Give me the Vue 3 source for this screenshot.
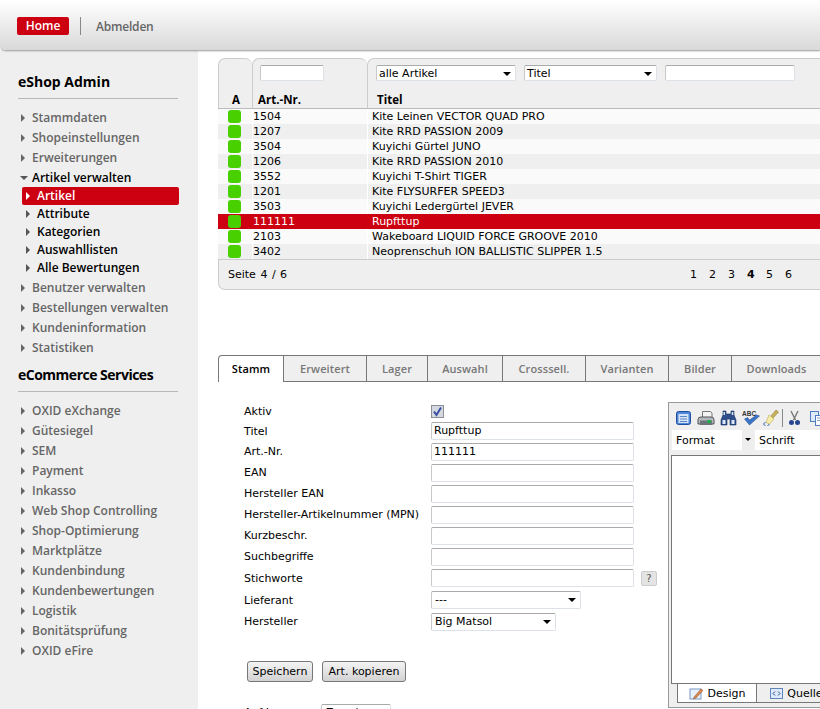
<script setup>
const menu = ['Stammdaten', 'Shopeinstellungen', 'Erweiterungen']
const subMenu = ['Artikel', 'Attribute', 'Kategorien', 'Auswahllisten', 'Alle Bewertungen']
const menuAfter = ['Benutzer verwalten', 'Bestellungen verwalten', 'Kundeninformation', 'Statistiken']
const services = [
  'OXID eXchange', 'Gütesiegel', 'SEM', 'Payment', 'Inkasso', 'Web Shop Controlling',
  'Shop-Optimierung', 'Marktplätze', 'Kundenbindung', 'Kundenbewertungen', 'Logistik',
  'Bonitätsprüfung', 'OXID eFire',
]
const rows = [
  ['1504', 'Kite Leinen VECTOR QUAD PRO'],
  ['1207', 'Kite RRD PASSION 2009'],
  ['3504', 'Kuyichi Gürtel JUNO'],
  ['1206', 'Kite RRD PASSION 2010'],
  ['3552', 'Kuyichi T-Shirt TIGER'],
  ['1201', 'Kite FLYSURFER SPEED3'],
  ['3503', 'Kuyichi Ledergürtel JEVER'],
  ['111111', 'Rupfttup'],
  ['2103', 'Wakeboard LIQUID FORCE GROOVE 2010'],
  ['3402', 'Neoprenschuh ION BALLISTIC SLIPPER 1.5'],
]
const tabs = [
  ['Stamm', 66], ['Erweitert', 83], ['Lager', 61], ['Auswahl', 75],
  ['Crosssell.', 83], ['Varianten', 83], ['Bilder', 63], ['Downloads', 90],
]
const fields = [
  ['Titel', 'Rupfttup', 20],
  ['Art.-Nr.', '111111', 21],
  ['EAN', '', 21],
  ['Hersteller EAN', '', 21],
  ['Hersteller-Artikelnummer (MPN)', '', 21],
  ['Kurzbeschr.', '', 21],
  ['Suchbegriffe', '', 21],
]
</script>

<template>
  <div class="page">
    <header class="top">
      <span class="home">Home</span>
      <span class="sep"></span>
      <span class="logout">Abmelden</span>
    </header>

    <div class="body">
      <aside class="side">
        <h2 class="side-title">eShop Admin</h2>
        <ul class="nav">
          <li v-for="m in menu" :key="m"><i class="arrow"></i>{{ m }}</li>
          <li class="open"><i class="arrow down"></i>Artikel verwalten</li>
        </ul>
        <ul class="sub">
          <li v-for="(s, i) in subMenu" :key="s" :class="{ active: i === 0 }"><i class="arrow"></i>{{ s }}</li>
        </ul>
        <ul class="nav">
          <li v-for="m in menuAfter" :key="m"><i class="arrow"></i>{{ m }}</li>
        </ul>
        <h2 class="side-title second">eCommerce Services</h2>
        <ul class="nav">
          <li v-for="m in services" :key="m"><i class="arrow"></i>{{ m }}</li>
        </ul>
      </aside>

      <main class="main">
        <section class="list">
          <div class="list-head">
            <div class="col-a"><b>A</b></div>
            <div class="col-nr">
              <span class="fake-input nr-input"></span>
              <b>Art.-Nr.</b>
            </div>
            <div class="col-title">
              <div class="filters">
                <span class="fake-input sel w1">alle Artikel<i class="caret"></i></span>
                <span class="fake-input sel w2">Titel<i class="caret"></i></span>
                <span class="fake-input w3"></span>
              </div>
              <b>Titel</b>
            </div>
          </div>
          <div
            v-for="(r, i) in rows"
            :key="r[0]"
            class="row"
            :class="{ odd: i % 2 === 1, sel: r[0] === '111111' }"
          >
            <span class="cell-a"><i class="dot"></i></span>
            <span class="cell-nr">{{ r[0] }}</span>
            <span class="cell-title">{{ r[1] }}</span>
          </div>
          <div class="list-foot">
            <span class="page-info">Seite 4 / 6</span>
            <div class="pages">
              <span>1</span><span>2</span><span>3</span><b>4</b><span>5</span><span>6</span>
            </div>
          </div>
        </section>

        <nav class="tabs">
          <span
            v-for="(t, i) in tabs"
            :key="t[0]"
            class="tab"
            :class="{ current: i === 0 }"
            :style="{ width: t[1] + 'px' }"
          >{{ t[0] }}</span>
        </nav>

        <section class="edit">
          <div class="form">
            <div class="f-row aktiv">
              <label>Aktiv</label>
              <span class="check">
                <svg width="11" height="11" viewBox="0 0 11 11"><path d="M2 5.500 4.500 9 9 1.500" fill="none" stroke="#3a4fa5" stroke-width="2"/></svg>
              </span>
            </div>
            <div v-for="f in fields" :key="f[0]" class="f-row" :style="{ height: f[2] + 'px' }">
              <label>{{ f[0] }}</label>
              <span class="fake-input text">{{ f[1] }}</span>
            </div>
            <div class="f-row tall">
              <label>Stichworte</label>
              <span class="fake-input text"></span>
              <span class="help">?</span>
            </div>
            <div class="f-row tall">
              <label>Lieferant</label>
              <span class="fake-input sel s-lief">---<i class="caret"></i></span>
            </div>
            <div class="f-row">
              <label>Hersteller</label>
              <span class="fake-input sel s-her">Big Matsol<i class="caret"></i></span>
            </div>
            <div class="buttons">
              <button class="btn b1">Speichern</button>
              <button class="btn b2">Art. kopieren</button>
            </div>
            <div class="f-row last">
              <label>Auf Lager</label>
              <span class="fake-input last-input">Zuordnen</span>
            </div>
          </div>

          <div class="editor">
            <div class="tools">
              <svg width="17" height="16" viewBox="0 0 17 16"><rect x="1.500" y="1.500" width="14" height="13" rx="2" fill="#4f86d6" stroke="#1f4ea0"/><rect x="3.500" y="4" width="10" height="9" fill="#d5e4f8"/><path d="M5 6.500h7M5 9h7M5 11.500h7" stroke="#5f86c4"/></svg>
              <svg width="18" height="16" viewBox="0 0 18 16"><path d="M5.500 7V1.500h8L15 3v4" fill="#f2f2f2" stroke="#777"/><path d="M1 9.500Q1 7 4 7h10q3 0 3 2.500V14H1z" fill="#b4b8be" stroke="#555"/><rect x="3" y="10.500" width="12" height="4.500" fill="#6f737a"/><rect x="10.500" y="10" width="3.500" height="3" fill="#19b347"/></svg>
              <svg width="17" height="16" viewBox="0 0 17 16"><path d="M3 1h3v3h5V1h3v4l2 5v5H10V9H7v6H1v-5l2-5z" fill="#2f4f8c" stroke="#16305f" stroke-width=".6"/><rect x="2.500" y="10" width="3" height="4" fill="#dce7f7"/><rect x="11.500" y="10" width="3" height="4" fill="#dce7f7"/><rect x="3.500" y="2" width="1.500" height="3" fill="#dce7f7"/><rect x="11.800" y="2" width="1.500" height="3" fill="#dce7f7"/></svg>
              <svg class="abc" width="18" height="16" viewBox="0 0 18 16"><text x="0" y="6" font-size="6.500" font-weight="700" font-family="Liberation Sans, sans-serif" fill="#333">ABC</text><path d="M2.500 9l5 6 10-9-3-1-7 5-2-2.500z" fill="#3c74c8" stroke="#1f4688" stroke-width=".5"/></svg>
              <svg width="17" height="18" viewBox="0 0 17 18"><path d="M9 7 14 1l2.500 2L11 9z" fill="#c9b25c" stroke="#8d7a30" stroke-width=".6"/><path d="M7 6l5 4-4.500 5-3.500-1.500z" fill="#f6eda8" stroke="#b8a858" stroke-width=".6"/><path d="M3.500 13 1.500 15l2 2M5.500 17l2-2" fill="none" stroke="#2f5fa8"/></svg>
              <i class="tool-sep"></i>
              <svg width="13" height="16" viewBox="0 0 13 16"><path d="M3 1l4.500 9M10 1 5.500 10" stroke="#7c7c7c" stroke-width="1.500" fill="none"/><circle cx="3.500" cy="12.500" r="2.500" fill="#27468f"/><circle cx="9.500" cy="12.500" r="2.500" fill="#27468f"/></svg>
              <svg class="copy" width="16" height="16" viewBox="0 0 16 16"><rect x=".5" y="1.500" width="8" height="10" fill="#dfeafa" stroke="#4f7fc0"/><rect x="5.500" y="5.500" width="9" height="10" fill="#fff" stroke="#4f7fc0"/><path d="M7 8h6M7 10.500h6" stroke="#7fa0d0"/></svg>
            </div>
            <div class="formats">
              <span class="fmt">Format<i class="fmt-btn"><i class="caret small"></i></i></span>
              <span class="fmt2">Schrift</span>
            </div>
            <div class="area"></div>
            <div class="ed-tabs">
              <span class="ed-tab on">
                <svg width="15" height="14" viewBox="0 0 15 14"><rect x="1" y="2" width="11" height="10" fill="#e8f0fb" stroke="#7a98c4"/><path d="M5 10 12 2l2 1.500L7 11l-2.500 1z" fill="#d98a4c" stroke="#8a4f2a" stroke-width=".5"/></svg>
                Design
              </span>
              <span class="ed-tab">
                <svg width="13" height="12" viewBox="0 0 13 12"><rect x=".5" y=".5" width="12" height="10" fill="#dfeafa" stroke="#5f86bd"/><path d="M5 3.500 3 5.500l2 2M8 3.500l2 2-2 2" fill="none" stroke="#234a8a"/></svg>
                Quelle
              </span>
            </div>
          </div>
        </section>
      </main>
    </div>
  </div>
</template>

<style scoped>
.page {
  width: 820px;
  height: 709px;
  overflow: hidden;
  font-family: "DejaVu Sans", sans-serif;
  font-size: 11px;
  color: #000;
  background: #fff;
}
.top {
  height: 50px;
  box-sizing: border-box;
  display: flex;
  align-items: center;
  padding: 2px 0 0 17px;
  background: linear-gradient(#fff, #d9d9d9);
  border-bottom-left-radius: 6px;
  box-shadow: 0 1px 2px #999;
  position: relative;
}
.home {
  width: 52px;
  height: 18px;
  line-height: 17px;
  background: #cc0011;
  color: #fff;
  border-radius: 2px;
  text-align: center;
  font-family: "Open Sans", sans-serif;
  font-size: 12px;
  font-weight: 600;
}
.sep {
  width: 1px;
  height: 18px;
  background: #888;
  margin: 0 15px 0 11px;
}
.logout {
  color: #666;
  font-weight: 600;
  font-family: "Open Sans", sans-serif;
  font-size: 12px;
  letter-spacing: -.2px;
}
.body {
  display: flex;
  height: 659px;
}
.side {
  width: 198px;
  flex: none;
  background: #efefef;
  padding: 24px 0 0 18px;
  box-sizing: border-box;
  font-family: "Open Sans", sans-serif;
}
.side-title {
  margin: 0 20px 9px 0;
  height: 16px;
  line-height: 16px;
  padding-bottom: 8px;
  border-bottom: 1px solid #b8b8b8;
  font-size: 14px;
  font-weight: 700;
  color: #000;
}
.side-title.second {
  margin-top: 9px;
  letter-spacing: -.5px;
}
.nav, .sub {
  list-style: none;
  margin: 0;
  padding: 0;
}
.sub {
  margin: -1px 0 1px;
}
.nav li {
  height: 20px;
  line-height: 20px;
  padding-left: 14px;
  font-size: 12px;
  font-weight: 600;
  color: #666;
  position: relative;
}
.nav li.open {
  color: #000;
}
.arrow {
  position: absolute;
  left: 3px;
  top: 6px;
  width: 0;
  height: 0;
  border-left: 4px solid #666;
  border-top: 4px solid transparent;
  border-bottom: 4px solid transparent;
}
.arrow.down {
  left: 2px;
  top: 8px;
  border-top: 4px solid #555;
  border-left: 4px solid transparent;
  border-right: 4px solid transparent;
  border-bottom: 0;
}
.sub li {
  height: 18px;
  line-height: 18px;
  width: 157px;
  margin-left: 4px;
  padding-left: 15px;
  box-sizing: border-box;
  font-size: 12px;
  font-weight: 600;
  position: relative;
  border-radius: 2px;
}
.sub li .arrow {
  left: 4px;
  top: 5px;
  border-left-color: #555;
}
.sub li.active {
  background: #cc0011;
  color: #fff;
}
.sub li.active .arrow {
  border-left-color: #fff;
}
.main {
  flex: 1;
  min-width: 0;
  overflow: hidden;
  padding: 8px 0 0 20px;
  box-sizing: border-box;
}
.list {
  width: 640px;
}
.list-head {
  display: flex;
  height: 51px;
  border-bottom: 1px solid #bbb;
  box-sizing: border-box;
}
.list-head b {
  font-family: "Open Sans", sans-serif;
  font-size: 11.5px;
}
.col-a, .col-nr, .col-title {
  background: #efefef;
  border-top: 1px solid #ccc;
  border-left: 1px solid #ccc;
  box-sizing: border-box;
  border-radius: 7px 7px 0 0;
  position: relative;
}
.col-a { width: 34px; }
.col-nr { width: 115px; }
.col-title { flex: 1; }
.col-a b { position: absolute; left: 13px; bottom: 1px; }
.col-nr b { position: absolute; left: 5px; bottom: 1px; }
.col-title b { position: absolute; left: 9px; bottom: 1px; }
.fake-input {
  display: block;
  box-sizing: border-box;
  background: #fff;
  border: 1px solid #dde2e8;
  border-top-color: #aaa;
  border-left-color: #c8c8c8;
  border-radius: 2px;
  font-size: 11px;
  line-height: 15px;
  padding-left: 2px;
}
.nr-input {
  position: absolute;
  left: 7px;
  top: 6px;
  width: 64px;
  height: 16px;
}
.filters {
  display: flex;
  gap: 8px;
  padding: 6px 0 0 8px;
}
.sel {
  position: relative;
}
.w1 { width: 140px; height: 16px; }
.w2 { width: 133px; height: 16px; }
.w3 { width: 130px; height: 16px; }
.caret {
  position: absolute;
  right: 4px;
  top: 6px;
  width: 0;
  height: 0;
  border-top: 4px solid #000;
  border-left: 4px solid transparent;
  border-right: 4px solid transparent;
}
.row {
  display: flex;
  height: 15px;
  line-height: 15px;
  background: #fafafa;
}
.row.odd {
  background: #efefef;
}
.row.sel {
  background: #cc0011;
  color: #fff;
}
.cell-a {
  width: 35px;
  flex: none;
  position: relative;
  box-sizing: border-box;
  border-right: 1px solid #fff;
}
.dot {
  position: absolute;
  left: 10px;
  top: 1px;
  width: 13px;
  height: 13px;
  background: #48d000;
  border-radius: 3px;
}
.cell-nr {
  width: 115px;
  flex: none;
  box-sizing: border-box;
  border-right: 1px solid #fff;
}
.row.sel .cell-a, .row.sel .cell-nr {
  border-right-color: transparent;
}
.cell-title {
  white-space: nowrap;
  padding-left: 4px;
}
.list-foot {
  height: 31px;
  box-sizing: border-box;
  border-top: 1px solid #ccc;
  border-bottom: 1px solid #ccc;
  border-left: 1px solid #ccc;
  border-bottom-left-radius: 7px;
  background: #efefef;
  padding: 0 0 0 9px;
  display: flex;
  align-items: center;
  justify-content: space-between;
}
.page-info {
  word-spacing: 1px;
}
.pages {
  display: flex;
  margin-right: 54px;
}
.pages > * {
  width: 19px;
  font-weight: 400;
}
.pages b {
  font-weight: 700;
}
.tabs {
  display: flex;
  margin-top: 65px;
  width: 640px;
}
.tab {
  height: 27px;
  box-sizing: border-box;
  flex: none;
  border-top: 1px solid #777;
  border-right: 1px solid #777;
  border-bottom: 1px solid #777;
  background: #efefef;
  color: #777;
  text-align: center;
  line-height: 25px;
  font-size: 11px;
  letter-spacing: .1px;
  font-family: "Open Sans", sans-serif;
  font-weight: 600;
}
.tab.current {
  background: #fff;
  color: #000;
  border-left: 1px solid #777;
  border-bottom: 0;
  border-top-left-radius: 4px;
}
.edit {
  display: flex;
  padding: 20px 0 0 26px;
}
.form {
  width: 424px;
  flex: none;
  padding-top: 2px;
}
.f-row {
  display: flex;
  align-items: center;
  height: 21px;
  position: relative;
}
.f-row label {
  width: 187px;
  flex: none;
  white-space: nowrap;
}
.f-row.aktiv {
  height: 20px;
  margin-top: -3px;
}
.f-row.tall {
  height: 22px;
}
.check {
  width: 13px;
  height: 13px;
  box-sizing: border-box;
  background: #d4d8df;
  border: 1px solid #8b8f96;
  display: flex;
  align-items: center;
  justify-content: center;
}
.text {
  width: 203px;
  height: 18px;
  line-height: 16px;
}
.help {
  width: 16px;
  height: 15px;
  margin-left: 7px;
  background: #e4e4e4;
  border: 1px solid #ccc;
  box-sizing: border-box;
  border-radius: 2px;
  text-align: center;
  line-height: 13px;
  font-size: 10px;
  color: #555;
}
.s-lief {
  width: 150px;
  height: 18px;
  line-height: 16px;
  padding-left: 3px;
}
.s-her {
  width: 125px;
  height: 18px;
  line-height: 16px;
  padding-left: 3px;
}
.buttons {
  display: flex;
  gap: 9px;
  padding: 29px 0 0 3px;
}
.btn {
  height: 21px;
  padding: 0;
  border: 1px solid #777;
  border-radius: 3px;
  background: linear-gradient(#f4f4f4, #d2d2d2);
  font-family: "DejaVu Sans", sans-serif;
  font-size: 11px;
  color: #000;
}
.b1 { width: 66px; }
.b2 { width: 84px; }
.last {
  margin-top: 20px;
}
.last label {
  width: 77px;
}
.last-input {
  width: 70px;
  height: 18px;
  padding-left: 4px;
}
.editor {
  flex: none;
  width: 240px;
  height: 306px;
  box-sizing: border-box;
  background: #efefef;
  border: 1px solid #999;
  position: relative;
}
.tools {
  display: flex;
  align-items: center;
  gap: 5px;
  height: 27px;
  padding: 2px 0 0 6px;
  box-sizing: border-box;
}
.abc {
  margin-right: -3px;
}
.tool-sep {
  width: 1px;
  height: 18px;
  background: #888;
  margin-left: -2px;
}
.copy {
  margin-left: 4px;
}
.formats {
  display: flex;
  height: 20px;
  margin: 0 0 0 3px;
  line-height: 21px;
}
.fmt {
  width: 81px;
  background: #fff;
  padding-left: 4px;
  box-sizing: border-box;
  position: relative;
  margin-right: 2px;
}
.fmt-btn {
  position: absolute;
  right: 0;
  top: 0;
  width: 11px;
  height: 20px;
  background: #eee;
}
.caret.small {
  right: 2px;
  top: 8px;
  border-top-width: 3px;
  border-left-width: 3px;
  border-right-width: 3px;
}
.fmt2 {
  flex: 1;
  background: #fff;
  padding-left: 4px;
}
.area {
  margin: 5px 0 0 2px;
  height: 229px;
  background: #fff;
  border: 1px solid #777;
  box-sizing: border-box;
}
.ed-tabs {
  display: flex;
  margin-left: 8px;
}
.ed-tab {
  height: 19px;
  box-sizing: border-box;
  width: 80px;
  display: flex;
  align-items: center;
  justify-content: center;
  gap: 4px;
  padding-top: 1px;
  border-right: 1px solid #777;
  border-bottom: 1px solid #777;
}
.ed-tab.on {
  background: #fff;
  border-left: 1px solid #777;
}
</style>
